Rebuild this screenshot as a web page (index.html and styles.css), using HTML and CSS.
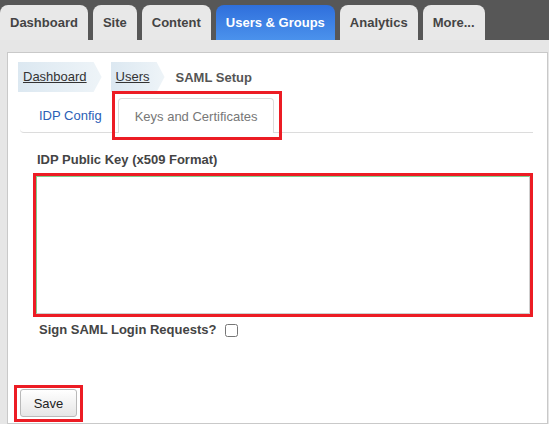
FILE: index.html
```html
<!DOCTYPE html>
<html>
<head>
<meta charset="utf-8">
<link rel="stylesheet" href="styles.css">
</head>
<body>
<div class="topnav">
  <div class="tab">Dashboard</div>
  <div class="tab">Site</div>
  <div class="tab">Content</div>
  <div class="tab active">Users &amp; Groups</div>
  <div class="tab">Analytics</div>
  <div class="tab">More...</div>
</div>
<div class="main">
  <div class="panel">
    <div class="crumbs">
      <a class="crumb crumb-first">Dashboard</a>
      <a class="crumb crumb-second">Users</a>
      <span class="crumb-current">SAML Setup</span>
    </div>
    <div class="subtabs">
      <div class="subtab">IDP Config</div>
      <div class="subtab subtab-active hl-tab">Keys and Certificates</div>
    </div>
    <div class="field-label">IDP Public Key (x509 Format)</div>
    <div class="hl-box">
      <textarea class="keyarea"></textarea>
    </div>
    <div class="sign-row">
      <span>Sign SAML Login Requests?</span>
      <input type="checkbox" class="check">
    </div>
    <div class="save-wrap">
      <button class="save">Save</button>
    </div>
  </div>
</div>
</body>
</html>
```

FILE: styles.css
```css
html, body {
  margin: 0;
  padding: 0;
}
body {
  width: 549px;
  height: 424px;
  overflow: hidden;
  font-family: "Liberation Sans", Arial, sans-serif;
  font-size: 13px;
  background: #e6e6e6;
  display: flex;
  flex-direction: column;
}
.topnav {
  background: #575757;
  height: 40px;
  box-sizing: border-box;
  padding-top: 5px;
  display: flex;
  gap: 5px;
  flex-shrink: 0;
}
.tab {
  height: 35px;
  line-height: 35px;
  padding: 0 10px;
  background: #e8e8e8;
  color: #444;
  font-weight: bold;
  border-radius: 8px 8px 0 0;
}
.tab.active {
  background: linear-gradient(#2f6fdc, #4b92ec);
  color: #fff;
}
.main {
  flex: 1;
  display: flex;
  padding: 12px 1px 0 7px;
  min-height: 0;
}
.panel {
  flex: 1;
  background: #fff;
  border: 1px solid #c9c9c9;
  display: flex;
  flex-direction: column;
}
.crumbs {
  display: flex;
  align-items: center;
  margin: 9px 0 0 10px;
  height: 30px;
}
.crumb {
  height: 30px;
  line-height: 30px;
  color: #333;
  text-decoration: underline;
  padding: 0 15px 0 5px;
  background: linear-gradient(to right, #dce8f1, #eef4f8);
  clip-path: polygon(0 0, calc(100% - 8px) 0, 100% 50%, calc(100% - 8px) 100%, 0 100%);
}
.crumb-second {
  margin-left: 9px;
}
.crumb-current {
  margin-left: 11px;
  font-weight: bold;
  color: #555;
}
.subtabs {
  display: flex;
  align-items: flex-end;
  margin: 6px 14px 0 12px;
  padding-left: 6px;
  height: 34px;
  border-bottom: 1px solid #dcdcdc;
  border-bottom-left-radius: 4px;
}
.subtab {
  height: 34px;
  line-height: 36px;
  padding: 0 13px;
  color: #2b60b6;
}
.subtab-active {
  margin-left: 3px;
  padding: 0 16px;
  color: #777;
  background: #fff;
  border: 1px solid #dcdcdc;
  border-bottom: none;
  border-radius: 4px 4px 0 0;
  box-sizing: border-box;
  margin-bottom: -1px;
  height: 35px;
  position: relative;
}
.hl-tab::after {
  content: "";
  position: absolute;
  left: -7px;
  top: -8px;
  right: -9px;
  bottom: -7px;
  border: 3px solid #ec1c24;
}
.field-label {
  margin: 19px 0 0 29px;
  line-height: 16px;
  font-weight: bold;
  color: #444;
}
.hl-box {
  margin: 5px 0 0 25px;
  width: 494px;
  border: 3px solid #ec1c24;
  display: flex;
}
.keyarea {
  flex: 1;
  height: 138px;
  box-sizing: border-box;
  border: 1px solid #cfcfcf;
  border-top-color: #7fd08f;
  border-left-color: #7fd08f;
  resize: none;
  margin: 0;
  outline: none;
}
.sign-row {
  margin: 5px 0 0 31px;
  line-height: 16px;
  font-weight: bold;
  color: #444;
  display: flex;
  align-items: center;
}
.check {
  margin: 0 0 0 9px;
  width: 13px;
  height: 13px;
}
.save-wrap {
  margin: 47px 0 0 6px;
  align-self: flex-start;
  border: 3px solid #ec1c24;
  padding: 1px 3px 2px 3px;
}
.save {
  width: 57px;
  height: 28px;
  font-family: "Liberation Sans", Arial, sans-serif;
  font-size: 13px;
  color: #222;
  background: linear-gradient(#ffffff, #e6e6e6);
  border: 1px solid #b9b9b9;
  border-radius: 3px;
  padding: 0;
}
```
